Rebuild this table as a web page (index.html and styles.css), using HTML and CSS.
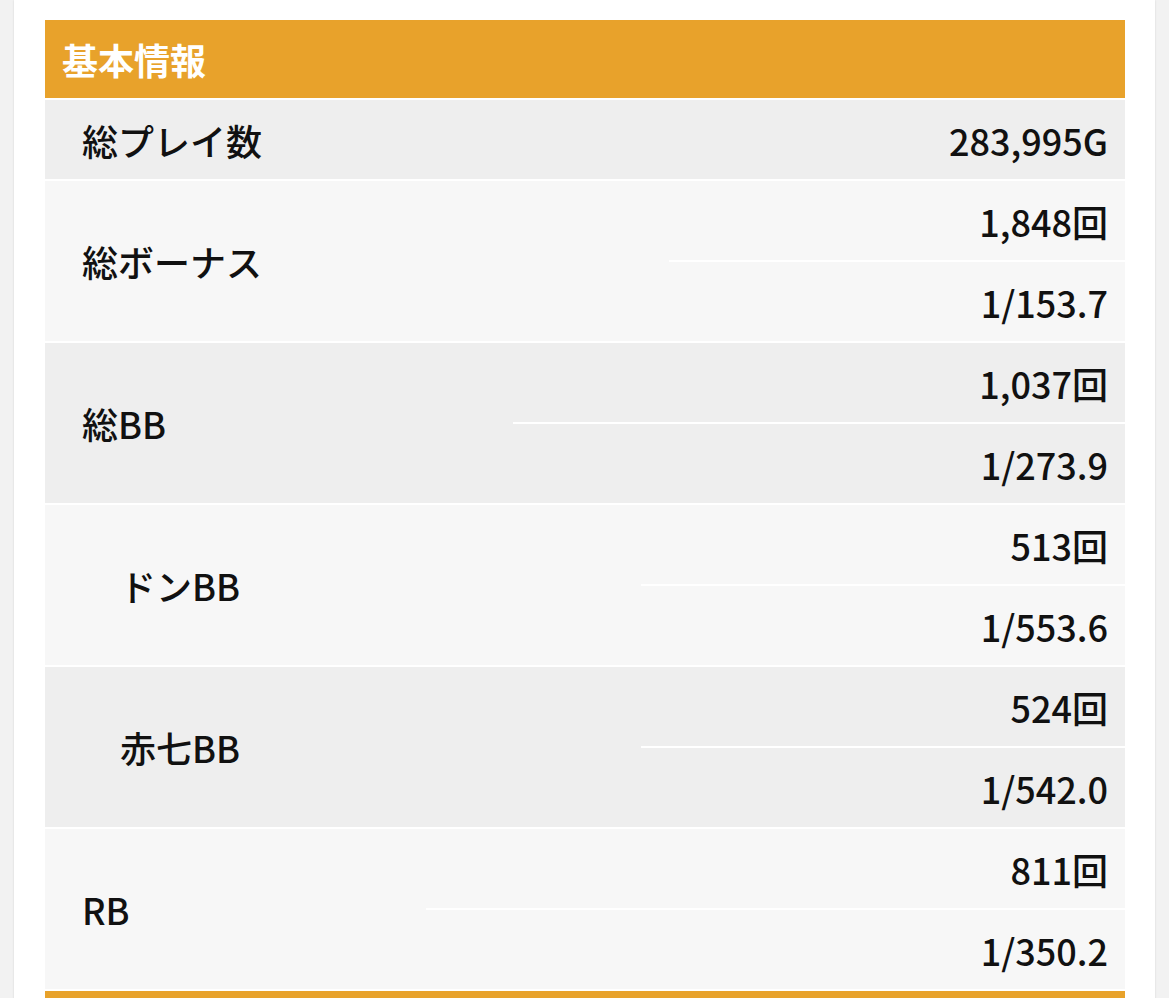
FILE: index.html
```html
<!DOCTYPE html>
<html lang="ja">
<head>
<meta charset="utf-8">
<link rel="stylesheet" href="styles.css">
</head>
<body>
<div class="page">
  <section class="info">
    <div class="head">基本情報</div>
    <div class="group g-dark">
      <div class="label w-single">総プレイ数</div>
      <div class="values"><div class="val">283,995G</div></div>
    </div>
    <div class="group g-light">
      <div class="label w-bonus">総ボーナス</div>
      <div class="values"><div class="val">1,848回</div><div class="val">1/153.7</div></div>
    </div>
    <div class="group g-dark">
      <div class="label w-bb">総BB</div>
      <div class="values"><div class="val">1,037回</div><div class="val">1/273.9</div></div>
    </div>
    <div class="group g-light">
      <div class="label sub w-sub">ドンBB</div>
      <div class="values"><div class="val">513回</div><div class="val">1/553.6</div></div>
    </div>
    <div class="group g-dark">
      <div class="label sub w-sub">赤七BB</div>
      <div class="values"><div class="val">524回</div><div class="val">1/542.0</div></div>
    </div>
    <div class="group g-light">
      <div class="label w-rb">RB</div>
      <div class="values"><div class="val">811回</div><div class="val">1/350.2</div></div>
    </div>
    <div class="head next"></div>
  </section>
</div>
</body>
</html>
```

FILE: styles.css
```css
html, body {
  margin: 0;
  padding: 0;
}
body {
  background: #f2f2f2;
  font-family: "Noto Sans CJK JP", "Noto Sans", sans-serif;
  color: #111;
  height: 998px;
  overflow: hidden;
}
.page {
  margin: 0 14px;
  background: #fff;
  min-height: 998px;
  box-shadow: 0 0 2px rgba(0, 0, 0, 0.12);
  padding: 20px 30px 0 31px;
}
.info {
  display: flex;
  flex-direction: column;
  gap: 2px;
}
.head {
  background: #e8a22b;
  color: #fff;
  font-weight: 700;
  font-size: 36px;
  height: 78px;
  line-height: 78px;
  padding-left: 17px;
}
.head.next {
  height: 40px;
}
.group {
  display: flex;
}
.g-dark { background: #eeeeee; }
.g-light { background: #f7f7f7; }
.label {
  display: flex;
  align-items: center;
  padding-left: 37px;
  font-size: 36px;
  font-weight: 500;
  flex: none;
  box-sizing: border-box;
}
.label.sub { padding-left: 75px; }
.w-single { width: 500px; }
.w-bonus { width: 624px; }
.w-bb { width: 468px; }
.w-sub { width: 596px; }
.w-rb { width: 381px; }
.values {
  flex: 1;
  display: flex;
  flex-direction: column;
  gap: 2px;
  background: #fff;
}
.val {
  height: 79px;
  display: flex;
  align-items: center;
  justify-content: flex-end;
  padding-right: 17px;
  font-size: 36px;
  font-weight: 500;
}
.g-dark .val { background: #eeeeee; }
.g-light .val { background: #f7f7f7; }
```
